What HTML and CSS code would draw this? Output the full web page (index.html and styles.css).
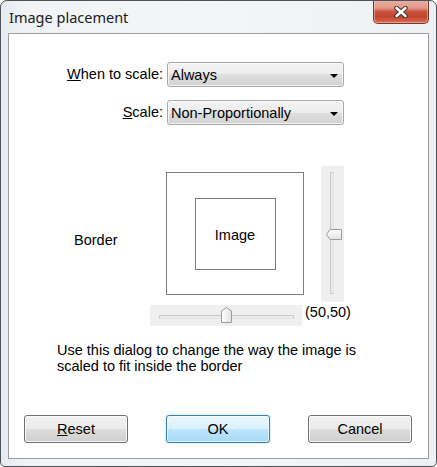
FILE: index.html
```html
<!DOCTYPE html>
<html>
<head>
<meta charset="utf-8">
<link rel="stylesheet" href="styles.css">
</head>
<body>
<div class="window">
  <div class="titlebar">
    <div class="title">Image placement</div>
    <div class="close">
      <svg width="14" height="12" viewBox="0 0 14 12">
        <path d="M2.5 2 L11.5 10 M11.5 2 L2.5 10" stroke="#3a2a28" stroke-width="4.4" stroke-linecap="round"/>
        <path d="M2.5 2 L11.5 10 M11.5 2 L2.5 10" stroke="#ffffff" stroke-width="2.6" stroke-linecap="round"/>
      </svg>
    </div>
  </div>
  <div class="client">
    <div class="form">
      <div class="label"><u>W</u>hen to scale:</div>
      <div class="combo"><span>Always</span><span class="arrow"></span></div>
      <div class="label"><u>S</u>cale:</div>
      <div class="combo"><span>Non-Proportionally</span><span class="arrow"></span></div>
    </div>
    <div class="preview">
      <div class="border-label">Border</div>
      <div class="preview-grid">
        <div class="frame-box"><div class="image-box">Image</div></div>
        <div class="vslider">
          <div class="vtrack"></div>
          <svg class="vthumb" width="16" height="11" viewBox="0 0 16 11">
            <defs><linearGradient id="gv" x1="0" y1="0" x2="0" y2="1"><stop offset="0" stop-color="#ffffff"/><stop offset="1" stop-color="#e2e2e2"/></linearGradient></defs>
            <path d="M15.5 0.5 H4 L0.5 5.5 L4 10.5 H15.5 Z" fill="url(#gv)" stroke="#9c9c9c"/>
          </svg>
        </div>
        <div class="hslider">
          <div class="htrack"></div>
          <svg class="hthumb" width="11" height="16" viewBox="0 0 11 16">
            <defs><linearGradient id="gh" x1="0" y1="0" x2="1" y2="0"><stop offset="0" stop-color="#ffffff"/><stop offset="1" stop-color="#e2e2e2"/></linearGradient></defs>
            <path d="M0.5 15.5 V4 L5.5 0.5 L10.5 4 V15.5 Z" fill="url(#gh)" stroke="#9c9c9c"/>
          </svg>
        </div>
        <div class="value">(50,50)</div>
      </div>
    </div>
    <div class="desc">Use this dialog to change the way the image is<br>scaled to fit inside the border</div>
    <div class="buttons">
      <div class="btn"><u>R</u>eset</div>
      <div class="btn btn-default">OK</div>
      <div class="btn">Cancel</div>
    </div>
  </div>
</div>
</body>
</html>
```
FILE: styles.css
```css
html, body {
  margin: 0;
  padding: 0;
  background: #ffffff;
}
body {
  font-family: "Liberation Sans", Arial, sans-serif;
  font-size: 14.5px;
  color: #000000;
}
.window {
  width: 437px;
  height: 467px;
  box-sizing: border-box;
  border: 1px solid #4e5258;
  border-radius: 7px 7px 5px 5px;
  background: linear-gradient(90deg, #e6ecf3 0%, #f1f3f5 6%, #f4f5f6 50%, #eef0f3 100%);
  display: flex;
  flex-direction: column;
  overflow: hidden;
}
.titlebar {
  height: 32px;
  flex: none;
  display: flex;
  justify-content: space-between;
  align-items: flex-start;
}
.title {
  font-family: "Noto Sans", "Open Sans", sans-serif;
  font-size: 14.5px;
  color: #1a1a1a;
  padding-left: 8px;
  line-height: 20px;
  margin-top: 6px;
}
.close {
  width: 56px;
  height: 24px;
  box-sizing: border-box;
  margin-top: -1px;
  margin-right: 7px;
  border: 1px solid #6e3a32;
  border-top: none;
  border-radius: 0 0 5px 5px;
  background: linear-gradient(180deg, #eab0a3 0%, #e0978a 35%, #c9543f 50%, #c4432d 72%, #d86d55 100%);
  box-shadow: inset 0 0 0 1px rgba(255, 220, 210, 0.45);
  display: flex;
  align-items: center;
  justify-content: center;
}
.client {
  flex: 1;
  margin: 0 7px 7px 7px;
  border: 1px solid #9a9ea3;
  background: #ffffff;
  display: flex;
  flex-direction: column;
}
.form {
  display: grid;
  grid-template-columns: 154px 177px;
  column-gap: 4px;
  row-gap: 13px;
  margin-top: 28px;
}
.label {
  text-align: right;
  align-self: center;
  line-height: 17px;
}
.combo {
  height: 25px;
  box-sizing: border-box;
  border: 1px solid #a7a7a7;
  border-radius: 3px;
  background: linear-gradient(180deg, #f3f3f3 0%, #ececec 50%, #dfdfdf 50%, #d2d2d2 100%);
  box-shadow: inset 0 0 0 1px rgba(255, 255, 255, 0.7);
  display: flex;
  align-items: center;
  justify-content: space-between;
  padding: 1px 5px 0 3px;
}
.arrow {
  width: 0;
  height: 0;
  border-left: 4px solid transparent;
  border-right: 4px solid transparent;
  border-top: 4px solid #000000;
  margin-top: 1px;
}
.preview {
  display: flex;
  margin-top: 41px;
  padding-left: 65px;
}
.border-label {
  width: 76px;
  margin-top: 66px;
  line-height: 17px;
}
.preview-grid {
  display: grid;
  grid-template-columns: 153px 52px;
  grid-template-rows: 136px 24px;
}
.frame-box {
  margin: 6px 0 0 16px;
  width: 138px;
  height: 123px;
  box-sizing: border-box;
  border: 1px solid #7d7d7d;
  display: flex;
  align-items: center;
  justify-content: center;
}
.image-box {
  width: 81px;
  height: 72px;
  box-sizing: border-box;
  border: 1px solid #7d7d7d;
  display: flex;
  align-items: center;
  justify-content: center;
  padding-top: 3px;
}
.vslider {
  position: relative;
  margin-left: 18px;
  width: 23px;
  height: 136px;
  background: #efefef;
  display: flex;
  justify-content: center;
}
.vtrack {
  width: 4px;
  height: 122px;
  margin-top: 6px;
  margin-left: -2px;
  box-sizing: border-box;
  border: 1px solid #c9c9c9;
  border-right-color: #e4e4e4;
  background: #e9ecec;
}
.vthumb {
  position: absolute;
  left: 5px;
  top: 63px;
}
.hslider {
  position: relative;
  margin-top: 3px;
  width: 152px;
  height: 21px;
  background: #efefef;
  display: flex;
  align-items: center;
  justify-content: center;
}
.htrack {
  width: 135px;
  height: 4px;
  margin-top: 2px;
  box-sizing: border-box;
  border: 1px solid #c9c9c9;
  border-bottom-color: #e4e4e4;
  background: #e9ecec;
}
.hthumb {
  position: absolute;
  left: 71px;
  top: 2px;
}
.value {
  padding-left: 2px;
  line-height: 17px;
  margin-top: 2px;
}
.desc {
  margin-top: 16px;
  padding-left: 48px;
  line-height: 16px;
}
.buttons {
  margin-top: auto;
  margin-bottom: 15px;
  display: flex;
  justify-content: space-between;
  padding: 0 16px 0 15px;
}
.btn {
  width: 104px;
  height: 28px;
  box-sizing: border-box;
  border: 1px solid #707070;
  border-radius: 3px;
  background: linear-gradient(180deg, #f2f2f2 0%, #ebebeb 50%, #dddddd 50%, #cfcfcf 100%);
  box-shadow: inset 0 0 0 1px rgba(255, 255, 255, 0.8);
  display: flex;
  align-items: center;
  justify-content: center;
  line-height: 17px;
}
.btn-default {
  border-color: #3c7fb1;
  background: linear-gradient(180deg, #eaf6fd 0%, #d9f0fc 50%, #bee6fd 50%, #a7d9f5 100%);
  box-shadow: inset 0 0 0 1px rgba(255, 255, 255, 0.6), 0 0 2px rgba(60, 160, 230, 0.5);
}
```
